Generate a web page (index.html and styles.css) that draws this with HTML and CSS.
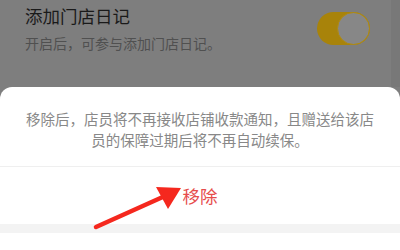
FILE: index.html
```html
<!DOCTYPE html>
<html lang="zh">
<head>
<meta charset="utf-8">
<link rel="stylesheet" href="styles.css">
</head>
<body>
<div class="page">
  <div class="setting">
    <div class="setting-text">
      <div class="setting-title">添加门店日记</div>
      <div class="setting-desc">开启后，可参与添加门店日记。</div>
    </div>
    <div class="toggle"><div class="knob"></div></div>
    <div class="edge"></div>
  </div>
  <div class="sheet">
    <div class="message">移除后，店员将不再接收店铺收款通知，且赠送给该店员的保障过期后将不再自动续保。</div>
    <div class="action">移除</div>
    <div class="gap"></div>
    <div class="cancel"></div>
  </div>
  <svg class="arrow" width="400" height="250" viewBox="0 0 400 250">
    <line x1="96" y1="227" x2="165" y2="196" stroke="#f5281e" stroke-width="4.5" stroke-linecap="round"/>
    <polygon points="181,188 156,187 168,209" fill="#f5281e"/>
  </svg>
</div>
</body>
</html>
```
FILE: styles.css
```css
* { box-sizing: border-box; }
html, body {
  margin: 0;
  padding: 0;
  width: 400px;
  height: 250px;
  overflow: hidden;
  background: #7e7e7e;
  font-family: "Noto Sans CJK SC", "Noto Sans", sans-serif;
}
.page {
  position: relative;
  width: 400px;
  height: 250px;
}
.setting {
  position: relative;
  height: 87px;
  display: flex;
  align-items: flex-start;
  justify-content: space-between;
  padding: 3px 30px 0 25px;
}
.edge {
  position: absolute;
  right: 0;
  top: 0;
  width: 9px;
  height: 100%;
  background: #787878;
}
.setting-title {
  font-size: 17.5px;
  line-height: 26px;
  color: #1a1a1a;
}
.setting-desc {
  margin-top: 4px;
  font-size: 14px;
  line-height: 20px;
  color: #505050;
}
.toggle {
  margin-top: 9px;
  width: 53px;
  height: 33px;
  border-radius: 17px;
  background: #a8830a;
  position: relative;
}
.knob {
  position: absolute;
  right: 0;
  top: 0;
  width: 33px;
  height: 33px;
  border-radius: 50%;
  background: #878787;
  border: 1.5px solid #b08a10;
}
.sheet {
  position: relative;
  background: #fff;
  border-radius: 12px 12px 0 0;
  height: 163px;
  display: flex;
  flex-direction: column;
}
.message {
  padding: 21px 24px 0;
  height: 80px;
  font-size: 14.5px;
  line-height: 21px;
  color: #888;
  text-align: center;
  border-bottom: 1px solid #efefef;
}
.action {
  height: 57px;
  display: flex;
  align-items: center;
  justify-content: center;
  font-size: 17.5px;
  color: #e64c4c;
}
.gap {
  height: 9px;
  background: #f3f3f3;
}
.cancel {
  flex: 1;
  background: #fff;
}
.arrow {
  position: absolute;
  left: 0;
  top: 0;
  pointer-events: none;
}
```
